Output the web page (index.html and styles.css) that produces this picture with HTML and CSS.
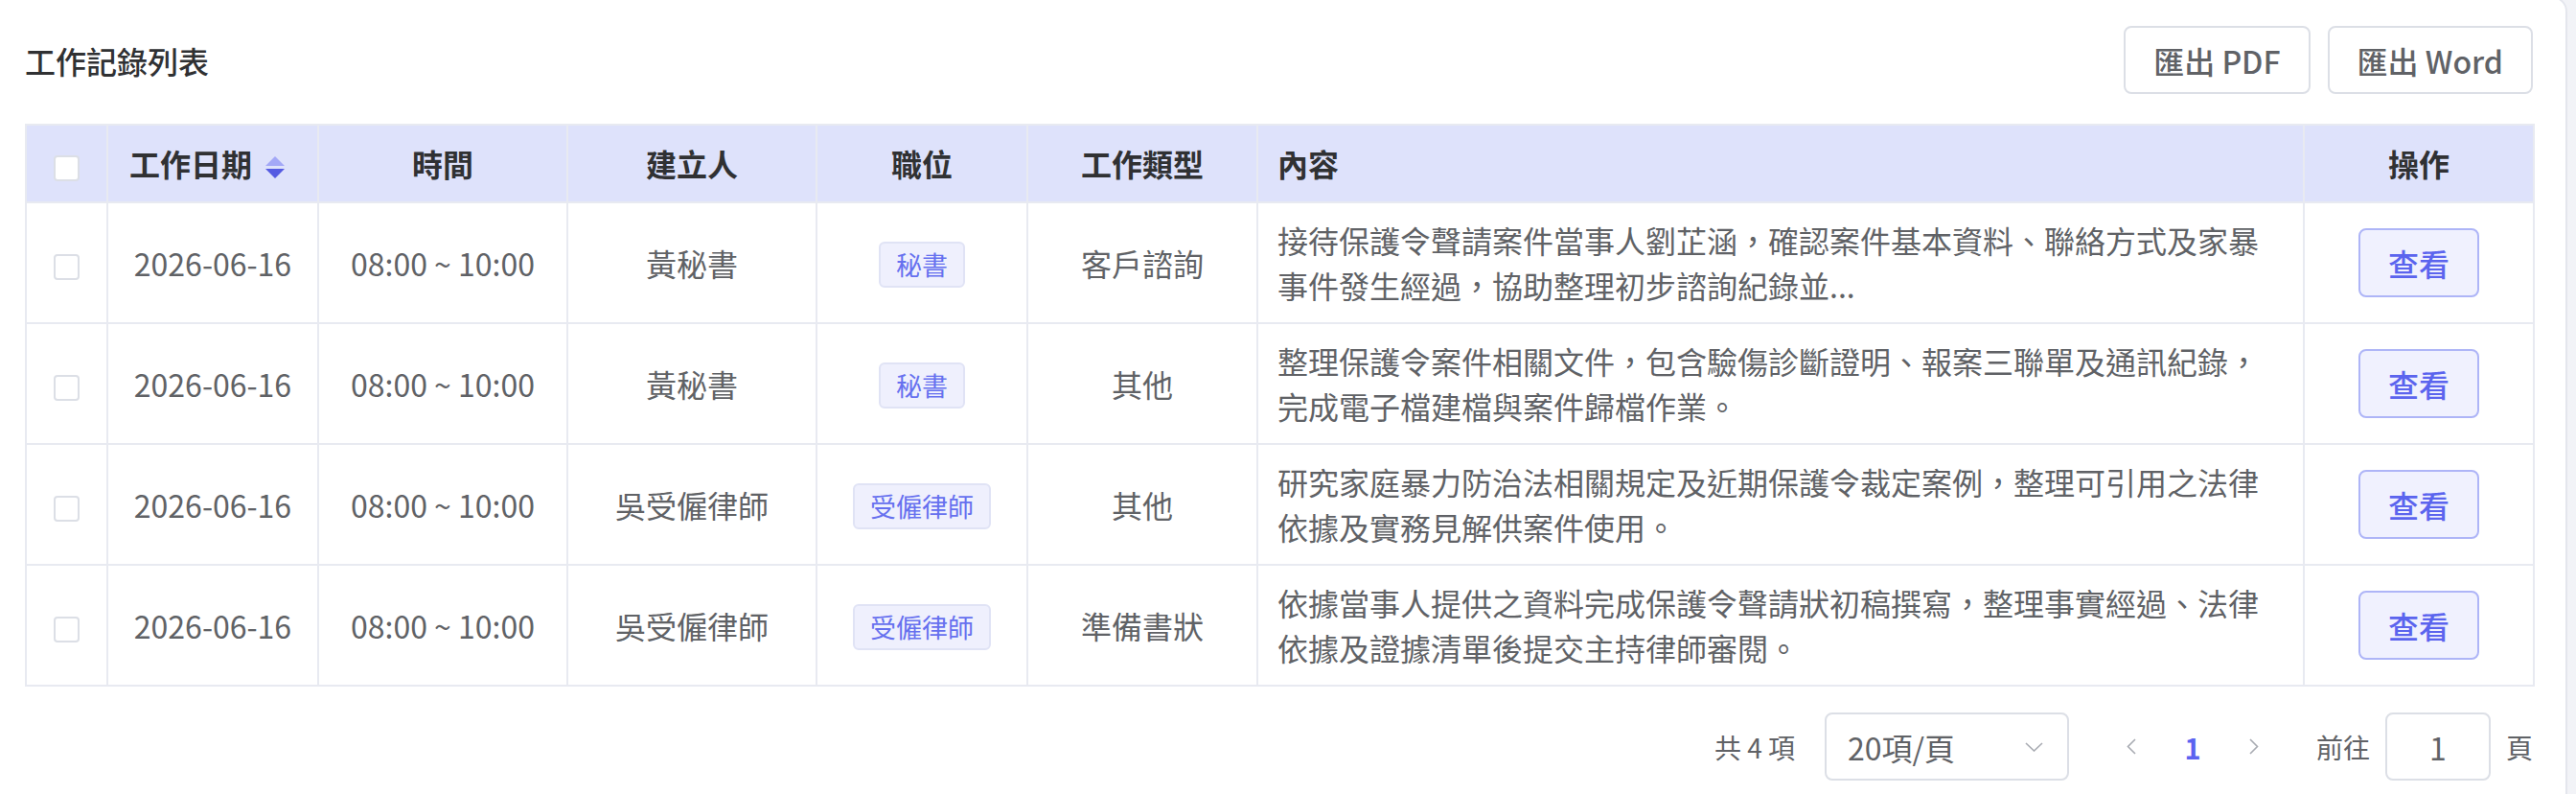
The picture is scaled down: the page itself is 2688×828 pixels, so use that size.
FILE: index.html
```html
<!DOCTYPE html>
<html lang="zh-Hant">
<head>
    <meta charset="UTF-8">
    <title>工作記錄列表</title>
    <link rel="stylesheet" href="styles.css">
</head>
<body>
    <div class="card">
        <div class="toolbar">
            <h2 class="title">工作記錄列表</h2>
            <div class="actions">
                <button class="btn">匯出 PDF</button>
                <button class="btn">匯出 Word</button>
            </div>
        </div>

        <table class="records">
            <colgroup>
                <col style="width: 85px">
                <col style="width: 220px">
                <col style="width: 260px">
                <col style="width: 260px">
                <col style="width: 220px">
                <col style="width: 240px">
                <col style="width: 1092px">
                <col style="width: 240px">
            </colgroup>
            <thead>
                <tr>
                    <th><span class="check check-head"></span></th>
                    <th class="sortable">工作日期<svg class="sort-icon" width="20" height="24" viewBox="0 0 20 24"><polygon points="10,0 20,10 0,10" fill="#a3a8f7"/><polygon points="0,13 20,13 10,23" fill="#555be2"/></svg></th>
                    <th>時間</th>
                    <th>建立人</th>
                    <th>職位</th>
                    <th>工作類型</th>
                    <th class="left">內容</th>
                    <th>操作</th>
                </tr>
            </thead>
            <tbody>
                <tr>
                    <td><span class="check"></span></td>
                    <td>2026-06-16</td>
                    <td>08:00 ~ 10:00</td>
                    <td>黃秘書</td>
                    <td><span class="tag">秘書</span></td>
                    <td>客戶諮詢</td>
                    <td class="left">接待保護令聲請案件當事人劉芷涵，確認案件基本資料、聯絡方式及家暴事件發生經過，協助整理初步諮詢紀錄並...</td>
                    <td><button class="view">查看</button></td>
                </tr>
                <tr>
                    <td><span class="check"></span></td>
                    <td>2026-06-16</td>
                    <td>08:00 ~ 10:00</td>
                    <td>黃秘書</td>
                    <td><span class="tag">秘書</span></td>
                    <td>其他</td>
                    <td class="left">整理保護令案件相關文件，包含驗傷診斷證明、報案三聯單及通訊紀錄，完成電子檔建檔與案件歸檔作業。</td>
                    <td><button class="view">查看</button></td>
                </tr>
                <tr>
                    <td><span class="check"></span></td>
                    <td>2026-06-16</td>
                    <td>08:00 ~ 10:00</td>
                    <td>吳受僱律師</td>
                    <td><span class="tag">受僱律師</span></td>
                    <td>其他</td>
                    <td class="left">研究家庭暴力防治法相關規定及近期保護令裁定案例，整理可引用之法律依據及實務見解供案件使用。</td>
                    <td><button class="view">查看</button></td>
                </tr>
                <tr>
                    <td><span class="check"></span></td>
                    <td>2026-06-16</td>
                    <td>08:00 ~ 10:00</td>
                    <td>吳受僱律師</td>
                    <td><span class="tag">受僱律師</span></td>
                    <td>準備書狀</td>
                    <td class="left">依據當事人提供之資料完成保護令聲請狀初稿撰寫，整理事實經過、法律依據及證據清單後提交主持律師審閱。</td>
                    <td><button class="view">查看</button></td>
                </tr>
            </tbody>
        </table>

        <div class="pager">
            <span class="total">共 4 項</span>
            <div class="size-select">
                <span>20項/頁</span>
                <svg width="19" height="10" viewBox="0 0 19 10"><polyline points="1,1 9.5,9 18,1" fill="none" stroke="#a8abb2" stroke-width="1.6"/></svg>
            </div>
            <div class="pages">
                <span class="pg"><svg width="10" height="17" viewBox="0 0 10 17"><polyline points="9,1 1.5,8.5 9,16" fill="none" stroke="#a8abb2" stroke-width="1.6"/></svg></span>
                <span class="pg current">1</span>
                <span class="pg"><svg width="10" height="17" viewBox="0 0 10 17"><polyline points="1,1 8.5,8.5 1,16" fill="none" stroke="#a8abb2" stroke-width="1.6"/></svg></span>
            </div>
            <span class="jump">前往</span>
            <div class="jump-input">1</div>
            <span class="jump-unit">頁</span>
        </div>
    </div>
</body>
</html>
```

FILE: styles.css
```css
body {
    margin: 0;
    background-color: #f2f3f7;
    font-family: "Noto Sans CJK TC", "Noto Sans", sans-serif;
    color: #606266;
    overflow: hidden;
}
.card {
    margin: -4px 9px 0 -10px;
    min-height: 900px;
    background-color: #fff;
    border: 2px solid #e4e6ed;
    border-radius: 16px;
    padding: 29px 34px 40px;
}
.toolbar {
    display: flex;
    justify-content: space-between;
    align-items: center;
    height: 71px;
    margin-bottom: 31px;
}
.title {
    margin: 0;
    font-size: 32px;
    font-weight: 500;
    color: #303133;
}
.actions {
    display: flex;
    gap: 18px;
}
.btn {
    height: 71px;
    padding: 0 29px;
    font-family: inherit;
    font-size: 32px;
    font-weight: 500;
    color: #606266;
    background: #fff;
    border: 2px solid #dcdfe6;
    border-radius: 8px;
}
.records {
    width: 2617px;
    table-layout: fixed;
    border-collapse: collapse;
    border: 2px solid #e8eaf1;
    font-size: 32px;
    line-height: 47px;
}
.records th,
.records td {
    border: 2px solid #e8eaf1;
    padding: 15px 20px;
    text-align: center;
}
.records th {
    background-color: #dee2fb;
    color: #303133;
    font-weight: 700;
    padding: 16px 20px;
}
.records th:first-child,
.records td:first-child {
    padding-left: 0;
    padding-right: 0;
}
.records .left {
    text-align: left;
}
.records .sortable {
    padding-right: 32px;
}
.sort-icon {
    margin-left: 14px;
    vertical-align: -3px;
}
.check {
    display: inline-block;
    width: 23px;
    height: 23px;
    border: 2px solid #dcdfe6;
    border-radius: 4px;
    background: #fff;
    vertical-align: middle;
}
.tag {
    display: inline-block;
    height: 44px;
    line-height: 44px;
    padding: 0 16px;
    font-size: 27px;
    color: #6670ef;
    background-color: #eff0fd;
    border: 2px solid #e0e3f5;
    border-radius: 6px;
    vertical-align: middle;
}
.view {
    width: 126px;
    height: 72px;
    font-family: inherit;
    font-size: 32px;
    font-weight: 500;
    color: #5b64ee;
    background-color: #f0f1fe;
    border: 2px solid #aeb5f7;
    border-radius: 8px;
    vertical-align: middle;
}
.pager {
    display: flex;
    justify-content: flex-end;
    align-items: center;
    height: 71px;
    margin-top: 27px;
    width: 2617px;
    font-size: 28px;
}
.total {
    margin-right: 31px;
}
.size-select {
    box-sizing: border-box;
    width: 255px;
    height: 71px;
    display: flex;
    align-items: center;
    justify-content: space-between;
    padding: 0 25px 0 22px;
    border: 2px solid #dcdfe6;
    border-radius: 8px;
    font-size: 32px;
}
.pages {
    display: flex;
    margin-left: 33px;
}
.pg {
    width: 64px;
    height: 71px;
    display: flex;
    align-items: center;
    justify-content: center;
}
.pg.current {
    color: #5b63f0;
    font-weight: 700;
    font-size: 29px;
}
.jump {
    margin-left: 33px;
}
.jump-input {
    box-sizing: border-box;
    width: 110px;
    height: 71px;
    margin: 0 16px;
    display: flex;
    align-items: center;
    justify-content: center;
    border: 2px solid #dcdfe6;
    border-radius: 8px;
    font-size: 32px;
}
```
